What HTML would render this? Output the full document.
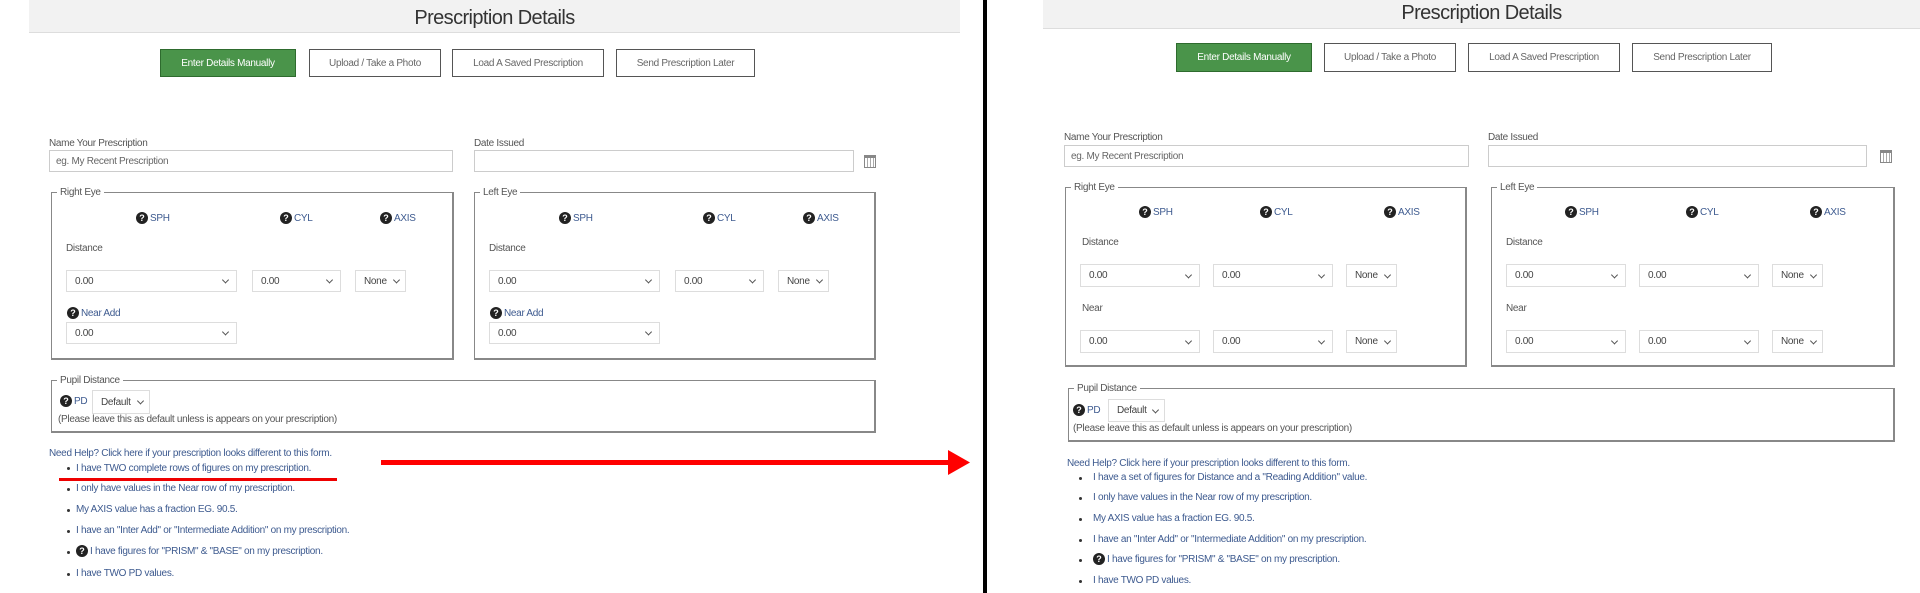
<!DOCTYPE html>
<html><head><meta charset="utf-8"><style>
*{box-sizing:border-box;margin:0;padding:0}
body{width:1920px;height:593px;background:#fff;position:relative;overflow:hidden;font-family:"Liberation Sans",sans-serif;font-size:10px;letter-spacing:-0.3px;color:#555;line-height:13px}
.a{position:absolute;white-space:nowrap}
.hdr{position:absolute;background:#f2f2f2;border-bottom:1px solid #ddd;text-align:center;font-size:20px;letter-spacing:-0.6px;color:#333}
.btn{position:absolute;border:1px solid #555;background:#fff;color:#666;font-size:10px;display:flex;align-items:center;justify-content:center}
.btn.g{background:#4a944a;border-color:#2e6b2e;color:#fff}
.inp{position:absolute;border:1px solid #ccc;background:#fff;padding-left:6px;display:flex;align-items:center;color:#666}
.fs{position:absolute;border:1px solid #888;border-bottom-width:2px;border-right-width:2px}
.lg{position:absolute;top:-7px;left:5px;background:#fff;padding:0 3px;color:#555}
.sel{position:absolute;border:1px solid #ddd;background:#fff;padding-left:8px;display:flex;align-items:center;color:#444}
.sel:after{content:"";position:absolute;right:8px;top:50%;width:4px;height:4px;border-right:1px solid #555;border-bottom:1px solid #555;transform:translateY(-70%) rotate(45deg)}
.sel.s:after{right:6px}
.q{display:inline-block;width:12px;height:12px;border-radius:50%;background:#222;color:#fff;font-size:9px;font-weight:bold;text-align:center;line-height:12px;vertical-align:top;margin-right:2px;letter-spacing:0}
.lk{color:#3d5a8f}
.bl{position:absolute;width:3px;height:3px;border-radius:50%;background:#333}
.cal{position:absolute;width:12px;height:13px;border:1px solid #888;border-top:3px solid #888;background:repeating-linear-gradient(90deg,#fff 0 2px,#aaa 2px 3px)}
</style></head><body>

<!-- LEFT PANEL -->
<div class="hdr" style="left:29px;top:0;width:931px;height:33px;line-height:36px">Prescription Details</div>
<div class="btn g" style="left:160px;top:49px;width:136px;height:28px">Enter Details Manually</div>
<div class="btn" style="left:309px;top:49px;width:132px;height:28px">Upload / Take a Photo</div>
<div class="btn" style="left:452px;top:49px;width:152px;height:28px">Load A Saved Prescription</div>
<div class="btn" style="left:616px;top:49px;width:139px;height:28px">Send Prescription Later</div>

<div class="a" style="left:49px;top:137px">Name Your Prescription</div>
<div class="inp" style="left:49px;top:150px;width:404px;height:22px">eg. My Recent Prescription</div>
<div class="a" style="left:474px;top:137px">Date Issued</div>
<div class="inp" style="left:474px;top:150px;width:380px;height:22px"></div>
<div class="cal" style="left:864px;top:155px"></div>

<div class="fs" style="left:51px;top:192px;width:403px;height:168px"><span class="lg">Right Eye</span></div>
<div class="fs" style="left:474px;top:192px;width:402px;height:168px"><span class="lg">Left Eye</span></div>

<div class="a lk" style="left:136px;top:212px"><span class="q">?</span>SPH</div>
<div class="a lk" style="left:280px;top:212px"><span class="q">?</span>CYL</div>
<div class="a lk" style="left:380px;top:212px"><span class="q">?</span>AXIS</div>
<div class="a lk" style="left:559px;top:212px"><span class="q">?</span>SPH</div>
<div class="a lk" style="left:703px;top:212px"><span class="q">?</span>CYL</div>
<div class="a lk" style="left:803px;top:212px"><span class="q">?</span>AXIS</div>

<div class="a" style="left:66px;top:242px">Distance</div>
<div class="a" style="left:489px;top:242px">Distance</div>
<div class="sel" style="left:66px;top:270px;width:171px;height:22px">0.00</div>
<div class="sel" style="left:252px;top:270px;width:89px;height:22px">0.00</div>
<div class="sel s" style="left:355px;top:270px;width:51px;height:22px">None</div>
<div class="sel" style="left:489px;top:270px;width:171px;height:22px">0.00</div>
<div class="sel" style="left:675px;top:270px;width:89px;height:22px">0.00</div>
<div class="sel s" style="left:778px;top:270px;width:51px;height:22px">None</div>

<div class="a lk" style="left:67px;top:307px"><span class="q">?</span>Near Add</div>
<div class="a lk" style="left:490px;top:307px"><span class="q">?</span>Near Add</div>
<div class="sel" style="left:66px;top:322px;width:171px;height:22px">0.00</div>
<div class="sel" style="left:489px;top:322px;width:171px;height:22px">0.00</div>

<div class="fs" style="left:51px;top:380px;width:825px;height:53px"><span class="lg">Pupil Distance</span></div>
<div class="a lk" style="left:60px;top:395px"><span class="q">?</span>PD</div>
<div class="sel s" style="left:92px;top:390px;width:58px;height:24px">Default</div>
<div class="a" style="left:58px;top:413px">(Please leave this as default unless is appears on your prescription)</div>

<div class="a lk" style="left:49px;top:447px">Need Help? Click here if your prescription looks different to this form.</div>
<div class="bl" style="left:67px;top:467px"></div><div class="a lk" style="left:76px;top:462px">I have TWO complete rows of figures on my prescription.</div>
<div class="a" style="left:59px;top:478px;width:278px;height:3px;background:#e00"></div>
<div class="bl" style="left:67px;top:488px"></div><div class="a lk" style="left:76px;top:482px">I only have values in the Near row of my prescription.</div>
<div class="bl" style="left:67px;top:509px"></div><div class="a lk" style="left:76px;top:503px">My AXIS value has a fraction EG. 90.5.</div>
<div class="bl" style="left:67px;top:530px"></div><div class="a lk" style="left:76px;top:524px">I have an "Inter Add" or "Intermediate Addition" on my prescription.</div>
<div class="bl" style="left:67px;top:551px"></div><div class="a lk" style="left:76px;top:545px"><span class="q">?</span>I have figures for "PRISM" &amp; "BASE" on my prescription.</div>
<div class="bl" style="left:67px;top:573px"></div><div class="a lk" style="left:76px;top:567px">I have TWO PD values.</div>

<!-- red arrow -->
<div class="a" style="left:381px;top:460px;width:570px;height:5px;background:#f00"></div>
<svg class="a" style="left:948px;top:450px" width="22" height="25"><polygon points="0,0 22,12.5 0,25" fill="#f00"/></svg>

<!-- divider -->
<div class="a" style="left:983px;top:0;width:4px;height:593px;background:#000"></div>

<!-- RIGHT PANEL -->
<div class="hdr" style="left:1043px;top:0;width:877px;height:29px;line-height:26px">Prescription Details</div>
<div class="btn g" style="left:1176px;top:43px;width:136px;height:29px">Enter Details Manually</div>
<div class="btn" style="left:1324px;top:43px;width:132px;height:29px">Upload / Take a Photo</div>
<div class="btn" style="left:1468px;top:43px;width:152px;height:29px">Load A Saved Prescription</div>
<div class="btn" style="left:1632px;top:43px;width:140px;height:29px">Send Prescription Later</div>

<div class="a" style="left:1064px;top:131px">Name Your Prescription</div>
<div class="inp" style="left:1064px;top:145px;width:405px;height:22px">eg. My Recent Prescription</div>
<div class="a" style="left:1488px;top:131px">Date Issued</div>
<div class="inp" style="left:1488px;top:145px;width:379px;height:22px"></div>
<div class="cal" style="left:1880px;top:150px"></div>

<div class="fs" style="left:1065px;top:187px;width:402px;height:180px"><span class="lg">Right Eye</span></div>
<div class="fs" style="left:1491px;top:187px;width:404px;height:180px"><span class="lg">Left Eye</span></div>

<div class="a lk" style="left:1139px;top:206px"><span class="q">?</span>SPH</div>
<div class="a lk" style="left:1260px;top:206px"><span class="q">?</span>CYL</div>
<div class="a lk" style="left:1384px;top:206px"><span class="q">?</span>AXIS</div>
<div class="a lk" style="left:1565px;top:206px"><span class="q">?</span>SPH</div>
<div class="a lk" style="left:1686px;top:206px"><span class="q">?</span>CYL</div>
<div class="a lk" style="left:1810px;top:206px"><span class="q">?</span>AXIS</div>

<div class="a" style="left:1082px;top:236px">Distance</div>
<div class="a" style="left:1506px;top:236px">Distance</div>
<div class="sel" style="left:1080px;top:264px;width:120px;height:23px">0.00</div>
<div class="sel" style="left:1213px;top:264px;width:120px;height:23px">0.00</div>
<div class="sel s" style="left:1346px;top:264px;width:51px;height:23px">None</div>
<div class="sel" style="left:1506px;top:264px;width:120px;height:23px">0.00</div>
<div class="sel" style="left:1639px;top:264px;width:120px;height:23px">0.00</div>
<div class="sel s" style="left:1772px;top:264px;width:51px;height:23px">None</div>

<div class="a" style="left:1082px;top:302px">Near</div>
<div class="a" style="left:1506px;top:302px">Near</div>
<div class="sel" style="left:1080px;top:330px;width:120px;height:23px">0.00</div>
<div class="sel" style="left:1213px;top:330px;width:120px;height:23px">0.00</div>
<div class="sel s" style="left:1346px;top:330px;width:51px;height:23px">None</div>
<div class="sel" style="left:1506px;top:330px;width:120px;height:23px">0.00</div>
<div class="sel" style="left:1639px;top:330px;width:120px;height:23px">0.00</div>
<div class="sel s" style="left:1772px;top:330px;width:51px;height:23px">None</div>

<div class="fs" style="left:1068px;top:388px;width:827px;height:54px"><span class="lg">Pupil Distance</span></div>
<div class="a lk" style="left:1073px;top:404px"><span class="q">?</span>PD</div>
<div class="sel s" style="left:1108px;top:399px;width:57px;height:23px">Default</div>
<div class="a" style="left:1073px;top:422px">(Please leave this as default unless is appears on your prescription)</div>

<div class="a lk" style="left:1067px;top:457px">Need Help? Click here if your prescription looks different to this form.</div>
<div class="bl" style="left:1079px;top:477px"></div><div class="a lk" style="left:1093px;top:471px">I have a set of figures for Distance and a "Reading Addition" value.</div>
<div class="bl" style="left:1079px;top:497px"></div><div class="a lk" style="left:1093px;top:491px">I only have values in the Near row of my prescription.</div>
<div class="bl" style="left:1079px;top:518px"></div><div class="a lk" style="left:1093px;top:512px">My AXIS value has a fraction EG. 90.5.</div>
<div class="bl" style="left:1079px;top:539px"></div><div class="a lk" style="left:1093px;top:533px">I have an "Inter Add" or "Intermediate Addition" on my prescription.</div>
<div class="bl" style="left:1079px;top:559px"></div><div class="a lk" style="left:1093px;top:553px"><span class="q">?</span>I have figures for "PRISM" &amp; "BASE" on my prescription.</div>
<div class="bl" style="left:1079px;top:580px"></div><div class="a lk" style="left:1093px;top:574px">I have TWO PD values.</div>

</body></html>
